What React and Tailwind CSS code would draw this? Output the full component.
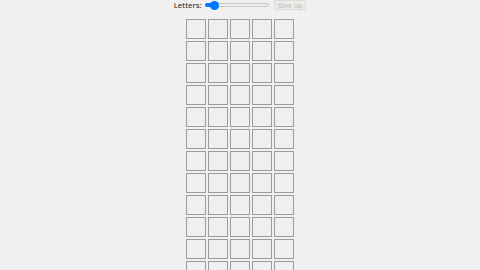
export default function App() {
  const rows = Array.from({ length: 12 })
  const cols = Array.from({ length: 5 })
  return (
    <div className="w-full h-screen overflow-hidden bg-[#f0f0f0] flex flex-col items-center" style={{ fontFamily: '"Open Sans", "Noto Sans", sans-serif' }}>
      <div className="flex items-center h-[11px]">
        <span className="text-[8px] leading-none text-[#111]">Letters:</span>
        <div className="relative w-[64px] h-[10px] ml-[3px] flex items-center">
          <div className="w-full h-[4px] rounded-full bg-[#efefef] border border-[#c8c8c8]" />
          <div className="absolute left-0 w-[10px] h-[4px] rounded-l-full bg-[#0075ff]" />
          <div className="absolute left-[5px] w-[9px] h-[9px] rounded-full bg-[#0075ff]" />
        </div>
        <button disabled className="ml-[5px] h-[10px] px-[3px] text-[7px] leading-none text-[#b8b8b8] bg-[#ececec] border border-[#dcdcdc] rounded-[2px]">Give up</button>
      </div>
      <div className="mt-[9px] grid grid-cols-5 gap-[2px] -ml-[1px]">
        {rows.map((_, r) =>
          cols.map((_, c) => (
            <div key={`${r}-${c}`} className="w-[20px] h-[20px] border-[1.5px] border-[#9c9c9c] bg-[#efefef]" />
          ))
        )}
      </div>
    </div>
  )
}
